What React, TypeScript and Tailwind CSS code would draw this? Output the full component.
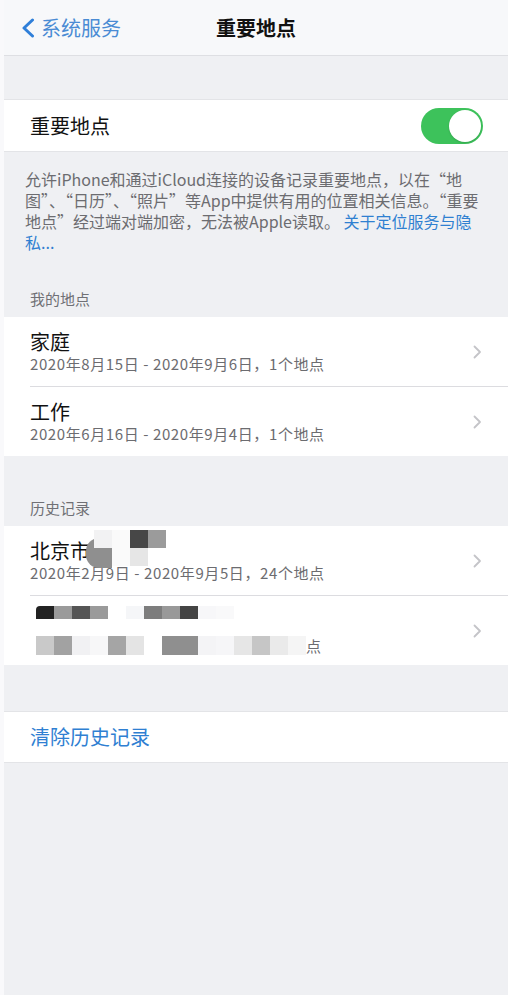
import React, { useState } from "react";

interface PlaceRow {
    title: string;
    detail: string;
    height: string;
}

const myPlaces: PlaceRow[] = [
    { title: "家庭", detail: "2020年8月15日 - 2020年9月6日，1个地点", height: "h-[70px]" },
    { title: "工作", detail: "2020年6月16日 - 2020年9月4日，1个地点", height: "h-[69px]" },
];

// 打码色块（隐私遮挡），每格 18px 宽
const maskTop = [
    "bg-[#222222] rounded-tl-[4px]",
    "bg-[#9a9a9a]",
    "bg-[#555555]",
    "bg-[#9a9a9a]",
    "bg-white",
    "bg-[#f5f6f8]",
    "bg-[#7d7d7d]",
    "bg-[#999999]",
    "bg-[#444444]",
    "bg-[#f7f7f9]",
    "bg-[#f9f9fa]",
];

const maskBottom = [
    "bg-[#c9c9c9]",
    "bg-[#a2a2a2]",
    "bg-[#f1f1f3]",
    "bg-[#f7f7f8]",
    "bg-[#a5a5a5]",
    "bg-[#e4e4e4]",
    "bg-white",
    "bg-[#8f8f8f]",
    "bg-[#8f8f8f]",
    "bg-[#f4f4f6]",
    "bg-[#f6f6f8]",
    "bg-[#e6e6e6]",
    "bg-[#c6c6c6]",
    "bg-[#eaeaea]",
    "bg-[#f5f5f5]",
];

const Chevron = () => (
    <svg width="9" height="14" viewBox="0 0 9 14" fill="none" className="shrink-0">
        <path d="M1.5 1.5 L7 7 L1.5 12.5" stroke="#c4c4c8" strokeWidth="1.8" strokeLinecap="round" strokeLinejoin="round" />
    </svg>
);

const Toggle: React.FC<{ on: boolean; onChange: () => void }> = ({ on, onChange }) => (
    <button
        type="button"
        onClick={onChange}
        className={`w-[62px] h-[36px] rounded-full p-[2px] flex items-center transition-colors ${on ? "bg-[#3dc25b] justify-end" : "bg-[#e5e5ea] justify-start"}`}
    >
        <span className="w-[32px] h-[32px] rounded-full bg-white shadow-[0_1px_2px_rgba(0,0,0,0.15)]" />
    </button>
);

const SectionHeader: React.FC<{ label: string; top: string }> = ({ label, top }) => (
    <div className={`${top} pb-[8px] pl-[26px] text-[15px] leading-[20px] text-[#707075]`}>{label}</div>
);

const Row: React.FC<{ row: PlaceRow; last?: boolean; children?: React.ReactNode }> = ({ row, last, children }) => (
    <div className="relative pl-[26px] bg-white">
        <div className={`flex items-center justify-between pr-[26px] ${row.height} ${last ? "" : "border-b border-[#dcdce0]"}`}>
            <div>
                <div className="text-[20px] leading-[24px] text-[#111]">{row.title}</div>
                <div className="text-[15px] leading-[20px] tracking-[0.6px] text-[#6c6c70]">{row.detail}</div>
            </div>
            <Chevron />
        </div>
        {children}
    </div>
);

export default function App() {
    const [enabled, setEnabled] = useState(true);

    return (
        <div className="min-h-screen flex bg-[#f9f9fb] font-['Noto_Sans_CJK_SC','Noto_Sans',sans-serif]">
            <div className="w-[4px] shrink-0" />
            <div className="flex-1 bg-[#eff0f3] min-h-screen">
                {/* 导航栏 */}
                <div className="h-[56px] bg-[#f7f8fa] border-b border-[#dedfe3] grid grid-cols-[1fr_auto_1fr] items-center">
                    <button type="button" className="flex items-center gap-[6px] pl-[17px] text-[20px] text-[#4a8bd4]">
                        <svg width="14" height="20" viewBox="0 0 14 20" fill="none">
                            <path d="M11.5 2 L3 10 L11.5 18" stroke="#2f7fd9" strokeWidth="3" strokeLinecap="round" strokeLinejoin="round" />
                        </svg>
                        <span>系统服务</span>
                    </button>
                    <div className="text-[20px] font-semibold text-[#111]">重要地点</div>
                    <div />
                </div>

                <div className="h-[43px]" />

                {/* 开关 */}
                <div className="h-[53px] bg-white border-y border-[#e3e4e7] flex items-center justify-between pl-[26px] pr-[25px]">
                    <span className="text-[20px] text-[#111]">重要地点</span>
                    <Toggle on={enabled} onChange={() => setEnabled(!enabled)} />
                </div>

                <div className="pt-[17px] px-[21px] text-[16px] leading-[21px] text-[#6c6c70] whitespace-nowrap">
                    <div>允许iPhone和通过iCloud连接的设备记录重要地点，以在“地</div>
                    <div>图”、“日历”、“照片”等App中提供有用的位置相关信息。“重要</div>
                    <div>
                        地点”经过端对端加密，无法被Apple读取。<span className="text-[#2f80d1]"> 关于定位服务与隐</span>
                    </div>
                    <div className="text-[#2f80d1]">私...</div>
                </div>

                <SectionHeader label="我的地点" top="pt-[36px]" />
                <div>
                    {myPlaces.map((p, i) => (
                        <Row key={p.title} row={p} last={i === myPlaces.length - 1} />
                    ))}
                </div>

                <SectionHeader label="历史记录" top="pt-[42px]" />
                <div>
                    <Row row={{ title: "北京市", detail: "2020年2月9日 - 2020年9月5日，24个地点", height: "h-[70px]" }}>
                        {/* 地名打码 */}
                        <div className="absolute left-[82px] top-[4px] w-[80px] h-[38px]">
                            <div className="absolute left-0 top-[8px] w-[26px] h-[30px] rounded-l-[13px] bg-[#8f8f8f]" />
                            <div className="absolute left-[8px] top-0 w-[18px] h-[18px] bg-[#f2f2f3]" />
                            <div className="absolute left-[26px] top-0 w-[18px] h-[36px] bg-[#fafafa]" />
                            <div className="absolute left-[44px] top-0 w-[18px] h-[18px] bg-[#474747]" />
                            <div className="absolute left-[62px] top-0 w-[18px] h-[18px] bg-[#9b9b9b]" />
                            <div className="absolute left-[44px] top-[18px] w-[18px] h-[18px] bg-[#e6e6e6]" />
                        </div>
                    </Row>
                    <div className="pl-[26px] bg-white">
                        <div className="h-[69px] flex items-center justify-between pr-[26px]">
                            <div className="pl-[6px] flex flex-col gap-[17px]">
                                <div className="flex h-[13px]">
                                    {maskTop.map((c, i) => (
                                        <div key={i} className={`w-[18px] h-full ${c}`} />
                                    ))}
                                </div>
                                <div className="flex items-end h-[19px]">
                                    {maskBottom.map((c, i) => (
                                        <div key={i} className={`w-[18px] h-full ${c}`} />
                                    ))}
                                    <span className="text-[15px] leading-[19px] text-[#6c6c70]">点</span>
                                </div>
                            </div>
                            <Chevron />
                        </div>
                    </div>
                </div>

                <div className="h-[46px]" />

                <div className="h-[52px] bg-white border-y border-[#e3e4e7] flex items-center pl-[26px]">
                    <button type="button" className="text-[20px] text-[#2f7fd2]">清除历史记录</button>
                </div>
            </div>
        </div>
    );
}
